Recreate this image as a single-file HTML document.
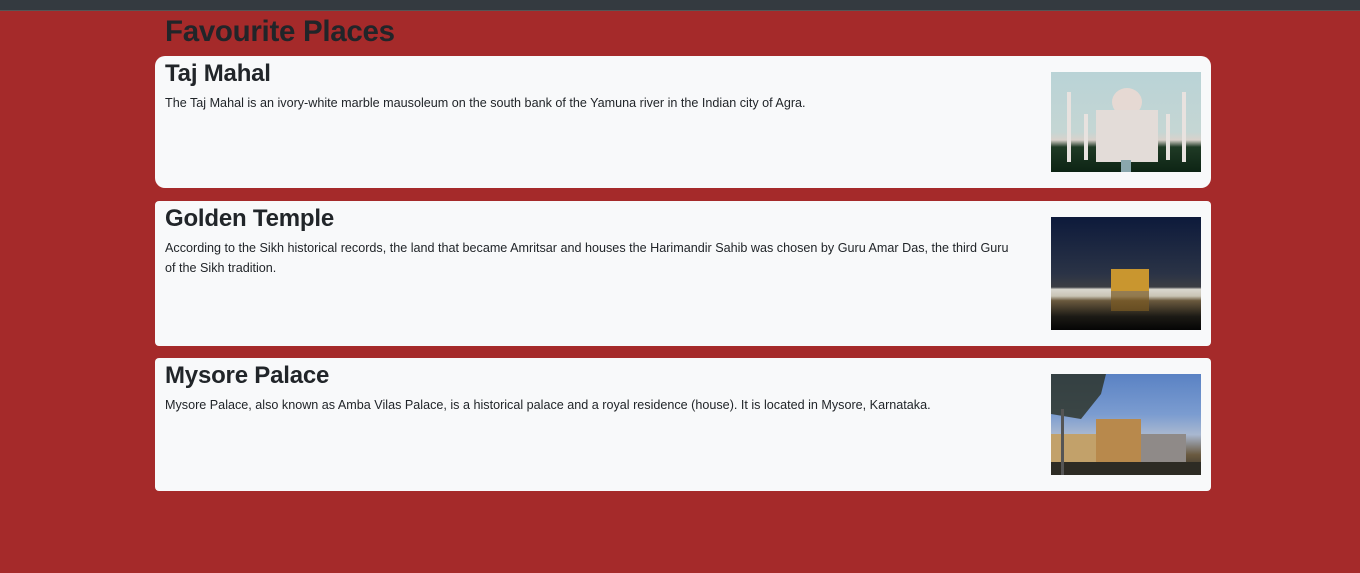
<!DOCTYPE html>
<html><head><meta charset="utf-8"><style>
body{margin:0;background:#a52a2a;font-family:"Liberation Sans",sans-serif;color:#212529;width:1360px;height:573px;overflow:hidden;position:relative}
.top{position:absolute;left:0;top:0;width:1360px;height:10px;background:#343a40;border-bottom:1px solid #555}
h1{position:absolute;left:165px;top:13px;margin:0;font-size:29.5px;font-weight:bold;line-height:38px;letter-spacing:-0.3px}
.card{position:absolute;left:155px;width:1056px;background:#f8f9fa}
.card h2{position:absolute;left:10px;margin:0;font-size:24px;font-weight:bold;line-height:30px;letter-spacing:-0.2px}
.card p{position:absolute;left:10px;width:850px;margin:0;font-size:12.6px;line-height:20px}
.img{position:absolute;left:896px;width:150px}
</style></head><body>
<div class="top"></div>
<h1>Favourite Places</h1>
<div class="card" style="top:56px;height:132px;border-radius:10px">
<h2 style="top:3px">Taj Mahal</h2>
<p style="top:37px">The Taj Mahal is an ivory-white marble mausoleum on the south bank of the Yamuna river in the Indian city of Agra.</p>
<div class="img" style="top:16px;height:100px;background:linear-gradient(#b9d3d6 0%,#c5d6d4 60%,#d9d2cc 68%,#1f3a25 75%,#0d2414 100%)">
<svg width="150" height="100"><ellipse cx="76" cy="30" rx="15" ry="14" fill="#e6d9d3"/><rect x="45" y="38" width="62" height="52" fill="#e3dcd8"/><rect x="16" y="20" width="4" height="70" fill="#e8e2df"/><rect x="131" y="20" width="4" height="70" fill="#e8e2df"/><rect x="33" y="42" width="4" height="46" fill="#e8e2df"/><rect x="115" y="42" width="4" height="46" fill="#e8e2df"/><rect x="70" y="88" width="10" height="12" fill="#8aa7ad"/></svg></div>
</div>
<div class="card" style="top:201px;height:145px;border-radius:4px">
<h2 style="top:3px">Golden Temple</h2>
<p style="top:37px">According to the Sikh historical records, the land that became Amritsar and houses the Harimandir Sahib was chosen by Guru Amar Das, the third Guru of the Sikh tradition.</p>
<div class="img" style="top:16px;height:113px;background:linear-gradient(#0d1a3b 0%,#2a3346 50%,#3b3d44 62%,#d9d7cf 64%,#c9c4b5 70%,#6b5a3e 74%,#1c1a15 88%,#050505 100%)">
<svg width="150" height="113"><rect x="60" y="52" width="38" height="22" fill="#c9962f"/><rect x="60" y="74" width="38" height="20" fill="#7a5a22" opacity=".7"/></svg></div>
</div>
<div class="card" style="top:358px;height:133px;border-radius:4px">
<h2 style="top:3px">Mysore Palace</h2>
<p style="top:37px">Mysore Palace, also known as Amba Vilas Palace, is a historical palace and a royal residence (house). It is located in Mysore, Karnataka.</p>
<div class="img" style="top:16px;height:101px;background:linear-gradient(#5a82c4 0%,#7b9cd0 40%,#a9b8d0 60%,#6a5a40 80%,#2c2a25 100%)">
<svg width="150" height="101"><path d="M0 0H55L50 20 30 45 0 40Z" fill="#2b2f22" opacity=".8"/><rect x="45" y="45" width="45" height="45" fill="#b8894c"/><rect x="90" y="60" width="45" height="30" fill="#8f8a88"/><rect x="0" y="60" width="45" height="30" fill="#c2a16a"/><rect x="0" y="88" width="150" height="13" fill="#2d2b24"/><rect x="10" y="35" width="3" height="66" fill="#555"/></svg></div>
</div>
</body></html>
